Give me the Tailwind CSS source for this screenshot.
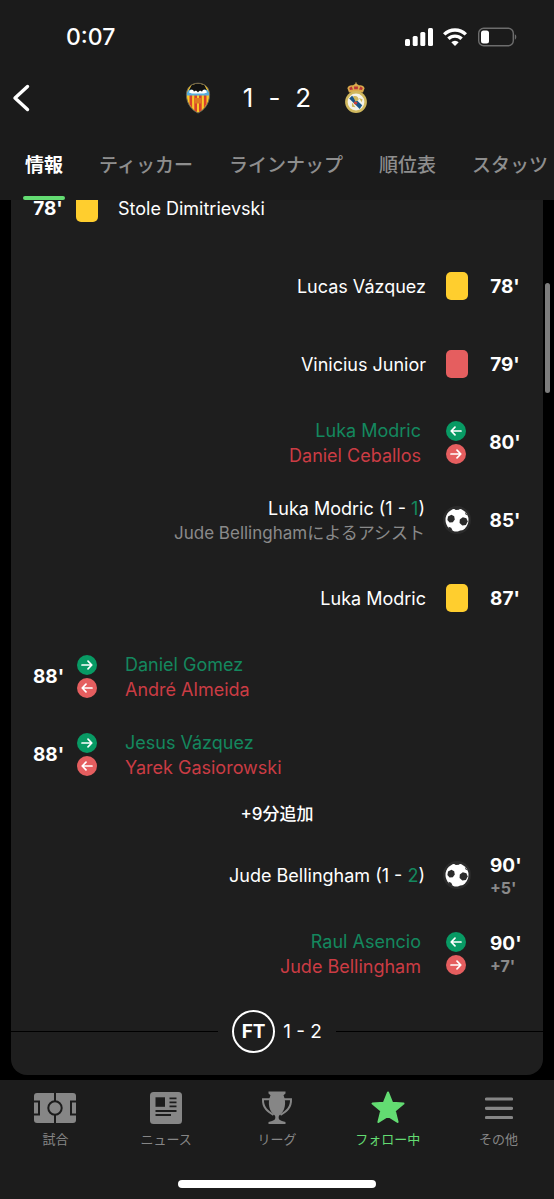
<!DOCTYPE html>
<html lang="ja">
<head>
  <meta charset="UTF-8">
  <meta name="viewport" content="width=device-width, initial-scale=1.0">
  <title>バレンシア 1 - 2 レアル・マドリード</title>
  <script src="https://cdn.jsdelivr.net/npm/@tailwindcss/browser@4"></script>
</head>
<body class="bg-black text-white font-['Inter','Noto_Sans_CJK_JP',sans-serif]">

  <!-- Shared icons -->
  <svg class="hidden">
    <symbol id="in-left" viewBox="0 0 20 20">
      <circle cx="10" cy="10" r="10" fill="#089a64"/>
      <path d="M15 10H5.5M9 6.2 5.2 10 9 13.8" fill="none" stroke="#fff" stroke-width="1.7" stroke-linecap="round" stroke-linejoin="round"/>
    </symbol>
    <symbol id="in-right" viewBox="0 0 20 20">
      <circle cx="10" cy="10" r="10" fill="#089a64"/>
      <path d="M5 10h9.5M11 6.2l3.800 3.800-3.800 3.800" fill="none" stroke="#fff" stroke-width="1.7" stroke-linecap="round" stroke-linejoin="round"/>
    </symbol>
    <symbol id="out-left" viewBox="0 0 20 20">
      <circle cx="10" cy="10" r="10" fill="#e55e5f"/>
      <path d="M15 10H5.5M9 6.2 5.2 10 9 13.8" fill="none" stroke="#fff" stroke-width="1.7" stroke-linecap="round" stroke-linejoin="round"/>
    </symbol>
    <symbol id="out-right" viewBox="0 0 20 20">
      <circle cx="10" cy="10" r="10" fill="#e55e5f"/>
      <path d="M5 10h9.5M11 6.2l3.800 3.800-3.800 3.800" fill="none" stroke="#fff" stroke-width="1.7" stroke-linecap="round" stroke-linejoin="round"/>
    </symbol>
    <symbol id="ball" viewBox="0 0 28 28">
      <circle cx="14" cy="14" r="14" fill="#2b2b2b"/>
      <circle cx="14" cy="14" r="11.5" fill="#fff"/>
      <path d="m5 10.400 3.400-1.600 2.800 1.400.6 3.200-2 2.900-3.200.2L4.400 14z" fill="#2b2b2b"/>
      <path d="m16.800 13.600 3-2.400 3.600 1 1.300 3.200-1.800 3.600-3.600.4-2.700-2.400z" fill="#2b2b2b"/>
      <path d="M10 2.200c2.400-1 5.600-.9 7.600-.1l-1.600 1.600-3.200.2zM5.400 20.800l2.800.9 1.600 3.200-3.200-1zM21.800 5.800l3 3.600-2.200-.9zM14.600 25.900l2.400-1.500 3 .2-2.400 1.400z" fill="#2b2b2b"/>
    </symbol>
  </svg>

  <div class="min-h-screen flex flex-col">

    <header class="relative z-10 bg-[#1b1b1b]">
      <!-- Status bar -->
      <div class="flex items-center justify-between h-[74px] pl-[66px] pr-[37px]">
        <span class="text-[23px] leading-6 font-medium">0:07</span>
        <div class="flex items-center gap-[10px]">
          <svg class="w-7 h-[18px]" viewBox="0 0 28 18" fill="#fff">
            <rect y="11" width="5" height="7" rx="1.5"/>
            <rect x="7.7" y="8" width="5" height="10" rx="1.5"/>
            <rect x="15.3" y="4" width="5" height="14" rx="1.5"/>
            <rect x="23" width="5" height="18" rx="1.5"/>
          </svg>
          <svg class="w-6 h-[18px]" viewBox="0 0 24 18" fill="none" stroke="#fff" stroke-width="3.4">
            <path d="M1.2 6.4a15.4 15.4 0 0 1 21.6 0"/>
            <path d="M5.4 10.8a9.4 9.4 0 0 1 13.2 0"/>
            <path d="m12 18-3.700-3.700a5.200 5.200 0 0 1 7.400 0z" fill="#fff" stroke="none"/>
          </svg>
          <svg class="w-10 h-5" viewBox="0 0 40 20">
            <rect x="1.7" y="1.2" width="34.6" height="17.6" rx="5" fill="none" stroke="#6d6d6d" stroke-width="1.4"/>
            <rect x="4" y="3.6" width="8" height="12.8" rx="2.5" fill="#fff"/>
            <path d="M37.8 7.3c2 .8 2 4.600 0 5.400z" fill="#6d6d6d"/>
          </svg>
        </div>
      </div>

      <!-- Score -->
      <div class="grid grid-cols-[60px_1fr_60px] items-center h-12">
        <button type="button" aria-label="戻る" class="pl-[12px]">
          <svg class="w-[18px] h-7" viewBox="0 0 18 28" fill="none" stroke="#fff" stroke-width="3.4" stroke-linecap="round" stroke-linejoin="round">
            <path d="M15.5 2.5 3 14l12.5 11.5"/>
          </svg>
        </button>
        <div class="flex items-center justify-center gap-8">
          <svg class="w-[26px] h-8" viewBox="0 0 26 32">
            <path d="M13 1.2c6.800 0 11.600 4.600 11.600 11.600C24.600 22 18.500 28.600 13 31 7.500 28.600 1.400 22 1.400 12.800 1.400 5.800 6.200 1.200 13 1.200z" fill="#f9c928"/>
            <path d="M4.500 13h2.600v13l-2.600-4zM9.300 13H12v17l-2.700-1.800zM14 13h2.700v15.200L14 30zM18.900 13h2.600v9l-2.600 4z" fill="#d9412c"/>
            <path d="M9.800 16h6.400v5.500H9.800z" fill="#dd7a24"/>
            <path d="M2 10.500c2-4.500 5-4.800 11-4.800s9 .3 11 4.800l.4 3H1.600z" fill="#57aede"/>
            <path d="M4 10.500C5 7 9 6 13 6s8 1 9 4.500l-3 .9H7z" fill="#fff"/>
            <path d="M4 8.200 6.500 3.200 11 1.800h4l4.500 1.400L22 8.200c-2.400-1.200-4.300-.6-5 1.500-1.300-1.500-2.800-1-4 .9-1.200-1.900-2.700-2.400-4-.9-.7-2.100-2.600-2.700-5-1.500z" fill="#111"/>
            <path d="M13 1.200c6.800 0 11.600 4.600 11.600 11.600C24.600 22 18.500 28.600 13 31 7.500 28.600 1.400 22 1.400 12.800 1.400 5.800 6.200 1.200 13 1.200z" fill="none" stroke="#6b6455" stroke-width="1"/>
          </svg>
          <h1 class="flex gap-[15px] text-[26px] leading-8 font-normal">
            <span>1</span>
            <span>-</span>
            <span>2</span>
          </h1>
          <svg class="w-[26px] h-8" viewBox="0 0 26 32">
            <path d="M6 10.500 4.400 6.200C5 3.800 7.500 2.700 10 3.300L12 2h2l2 1.300c2.500-.6 5 .5 5.600 2.900L20 10.500z" fill="#d9a94b"/>
            <path d="m7 8-.8-2 2.400-1.600L10 7.400zM11.200 7.300 11 4.500h4l-.2 2.800zM16 7.400l1.400-3L19.800 6 19 8z" fill="#b93436"/>
            <path d="M12.400.4h1.200v2.200h-1.200z" fill="#e2ba63"/>
            <circle cx="13" cy="20" r="10.900" fill="#d0b85e"/>
            <circle cx="13" cy="20" r="8.400" fill="#f4f3e8"/>
            <path d="M6.200 16.500 9 13.800l10.200 9.400-2.500 3.700z" fill="#195588"/>
            <path d="M10 14.500c3-1.500 6 .5 5.600 3.500l-3 1.800zM9 20.500l3.500 4.800-3.600-.6zM16 16l3.500 1.300-.8 3z" fill="#d0b85e"/>
            <path d="m11 19.500 3.500.8-.8 2.200-2.800-.6z" fill="#cc403a"/>
          </svg>
        </div>
      </div>

      <!-- Tabs -->
      <nav class="flex gap-9 pl-[25px] h-[78px] overflow-hidden whitespace-nowrap text-[19px] leading-7 font-medium text-[#8e8e8e]">
        <a href="#" class="relative pt-[30px] font-bold text-white">情報
          <span class="absolute bottom-0 -inset-x-[2px] h-1 rounded-full bg-[#63dc72]"></span>
        </a>
        <a href="#" class="pt-[30px]">ティッカー</a>
        <a href="#" class="pt-[30px]">ラインナップ</a>
        <a href="#" class="pt-[30px]">順位表</a>
        <a href="#" class="pt-[30px]">スタッツ</a>
      </nav>
    </header>

    <!-- Match events -->
    <main class="relative flex-1 overflow-hidden px-[11px] pb-[5px]">
      <div class="absolute right-[4px] top-[83px] w-[5px] h-[110px] rounded-full bg-[#7d7d7d]"></div>

      <section class="rounded-b-2xl bg-[#1e1e1e] pb-[5px] text-lg leading-[25px]">
        <ul class="-mt-[31px]">
          <li class="flex items-center h-[78px] px-[22px]">
            <span class="w-[30px] text-center text-[19px] font-bold">78'</span>
            <span class="ml-[13px] w-[22px] h-7 rounded-[5px] bg-[#ffce2e]"></span>
            <span class="ml-5">Stole Dimitrievski</span>
          </li>
          <li class="flex flex-row-reverse items-center h-[78px] px-[22px]">
            <span class="w-8 text-center text-[19px] font-bold">78'</span>
            <span class="mr-[21px] w-[22px] h-7 rounded-[5px] bg-[#ffce2e]"></span>
            <span class="mr-5">Lucas Vázquez</span>
          </li>
          <li class="flex flex-row-reverse items-center h-[78px] px-[22px]">
            <span class="w-8 text-center text-[19px] font-bold">79'</span>
            <span class="mr-[21px] w-[22px] h-7 rounded-[5px] bg-[#e55e5f]"></span>
            <span class="mr-5">Vinicius Junior</span>
          </li>
          <li class="flex flex-row-reverse items-center h-[78px] px-[22px]">
            <span class="w-8 text-center text-[19px] font-bold">80'</span>
            <span class="mr-[23px] flex flex-col gap-[3px]">
              <svg class="size-5"><use href="#in-left"/></svg>
              <svg class="size-5"><use href="#out-right"/></svg>
            </span>
            <span class="mr-[25px] pt-0.5 text-right">
              <span class="block text-[#14885e]">Luka Modric</span>
              <span class="block text-[#cb3c44]">Daniel Ceballos</span>
            </span>
          </li>
          <li class="flex flex-row-reverse items-center h-[78px] px-[22px]">
            <span class="w-8 text-center text-[19px] font-bold">85'</span>
            <svg class="mr-[18px] size-7"><use href="#ball"/></svg>
            <span class="mr-[18px] pt-0.5 text-right">
              <span class="block">Luka Modric (1 - <span class="text-[#14885e]">1</span>)</span>
              <span class="block text-[17px] text-[#8a8a8a]">Jude Bellinghamによるアシスト</span>
            </span>
          </li>
          <li class="flex flex-row-reverse items-center h-[78px] px-[22px]">
            <span class="w-8 text-center text-[19px] font-bold">87'</span>
            <span class="mr-[21px] w-[22px] h-7 rounded-[5px] bg-[#ffce2e]"></span>
            <span class="mr-5">Luka Modric</span>
          </li>
          <li class="flex items-center h-[78px] px-[22px]">
            <span class="w-[30px] text-center text-[19px] font-bold">88'</span>
            <span class="ml-[14px] flex flex-col gap-[3px]">
              <svg class="size-5"><use href="#in-right"/></svg>
              <svg class="size-5"><use href="#out-left"/></svg>
            </span>
            <span class="ml-7 pt-0.5">
              <span class="block text-[#14885e]">Daniel Gomez</span>
              <span class="block text-[#cb3c44]">André Almeida</span>
            </span>
          </li>
          <li class="flex items-center h-[78px] px-[22px]">
            <span class="w-[30px] text-center text-[19px] font-bold">88'</span>
            <span class="ml-[14px] flex flex-col gap-[3px]">
              <svg class="size-5"><use href="#in-right"/></svg>
              <svg class="size-5"><use href="#out-left"/></svg>
            </span>
            <span class="ml-7 pt-0.5">
              <span class="block text-[#14885e]">Jesus Vázquez</span>
              <span class="block text-[#cb3c44]">Yarek Gasiorowski</span>
            </span>
          </li>
          <li class="flex items-center justify-center h-[43px] text-[17px] font-medium">+9分追加</li>
          <li class="flex flex-row-reverse items-center h-[78px] px-[22px]">
            <span class="w-8 pl-px text-[19px] font-bold">90'
              <span class="block text-base leading-5 text-[#8a8a8a]">+5'</span>
            </span>
            <svg class="mr-[18px] size-7"><use href="#ball"/></svg>
            <span class="mr-[18px]">Jude Bellingham (1 - <span class="text-[#14885e]">2</span>)</span>
          </li>
          <li class="flex flex-row-reverse items-center h-[78px] px-[22px]">
            <span class="w-8 pl-px text-[19px] font-bold">90'
              <span class="block text-base leading-5 text-[#8a8a8a]">+7'</span>
            </span>
            <span class="mr-[23px] flex flex-col gap-[3px]">
              <svg class="size-5"><use href="#in-left"/></svg>
              <svg class="size-5"><use href="#out-right"/></svg>
            </span>
            <span class="mr-[25px] pt-0.5 text-right">
              <span class="block text-[#14885e]">Raul Asencio</span>
              <span class="block text-[#cb3c44]">Jude Bellingham</span>
            </span>
          </li>
        </ul>

        <!-- Full time -->
        <div class="flex items-center h-[78px] text-[19px]">
          <span class="flex-1 h-px bg-black"></span>
          <span class="ml-[14px] size-[43px] flex items-center justify-center rounded-full border-2 border-white font-bold">FT</span>
          <span class="ml-2 mr-[14px]">1 - 2</span>
          <span class="flex-1 h-px bg-black"></span>
        </div>
      </section>
    </main>

    <!-- Bottom navigation -->
    <footer class="bg-[#1c1c1c]">
      <nav class="grid grid-cols-5 pt-[10px] text-[13px] leading-5 text-center text-[#868686]">
        <a href="#" class="flex flex-col items-center gap-[3px]">
          <svg class="w-[42px] h-9" viewBox="0 0 42 36">
            <rect y="3" width="42" height="30" rx="3" fill="#868686"/>
            <path d="M21 3v8.500M21 24.500V33M0 11.500h5v13H0M42 11.500h-5v13h5" fill="none" stroke="#1c1c1c" stroke-width="2"/>
            <circle cx="21" cy="18" r="6.700" fill="none" stroke="#1c1c1c" stroke-width="2"/>
          </svg>
          試合
        </a>
        <a href="#" class="flex flex-col items-center gap-[3px]">
          <svg class="w-8 h-9" viewBox="0 0 32 36">
            <rect y="2" width="32" height="32" rx="3.500" fill="#868686"/>
            <path d="M5.500 7.300h9.500v9.500H5.500z" fill="#1c1c1c"/>
            <path d="M19.500 8.300h7M19.500 12.300h7M19.500 16.300h7M5.500 21h21M5.500 25h15.500" stroke="#1c1c1c" stroke-width="1.800"/>
          </svg>
          ニュース
        </a>
        <a href="#" class="flex flex-col items-center gap-[3px]">
          <svg class="w-8 h-9" viewBox="0 0 32 36">
            <path d="M7.500 1.500h17v2l-2 1.700c3.400 7.800 1.300 16.300-4.300 20.300-.7 1-.7 2.700 0 4 1.300 1.400 4 1.700 6.300 2.500v2h-17v-2c2.300-.8 5-1.100 6.300-2.500.7-1.300.7-3 0-4C8.200 21.500 6.100 13 9.500 5.200L7.500 3.500z" fill="#868686"/>
            <path d="M9 9.300H2c-.4 8.500 4.500 12 10.500 15.700M23 9.300h7c.4 8.500-4.500 12-10.500 15.700" fill="none" stroke="#868686" stroke-width="2"/>
          </svg>
          リーグ
        </a>
        <a href="#" class="flex flex-col items-center gap-[3px] text-[#63dc72]">
          <svg class="w-[34px] h-9" viewBox="0 0 34 36">
            <path d="m17 2.500 4.200 10.300 11.300.8-8.700 7.200 2.800 11.200L17 26l-9.600 6 2.800-11.200-8.700-7.200 11.300-.8z" fill="currentColor" stroke="currentColor" stroke-width="2" stroke-linejoin="round"/>
          </svg>
          フォロー中
        </a>
        <a href="#" class="flex flex-col items-center gap-[3px]">
          <svg class="w-7 h-9" viewBox="0 0 28 36">
            <path d="M1.500 9h25M1.500 18.300h25M1.500 27.500h25" stroke="#868686" stroke-width="3.200" stroke-linecap="round"/>
          </svg>
          その他
        </a>
      </nav>
      <div class="mx-auto mt-[31px] mb-[11px] w-[198px] h-2 rounded-full bg-white"></div>
    </footer>

  </div>

</body>
</html>
